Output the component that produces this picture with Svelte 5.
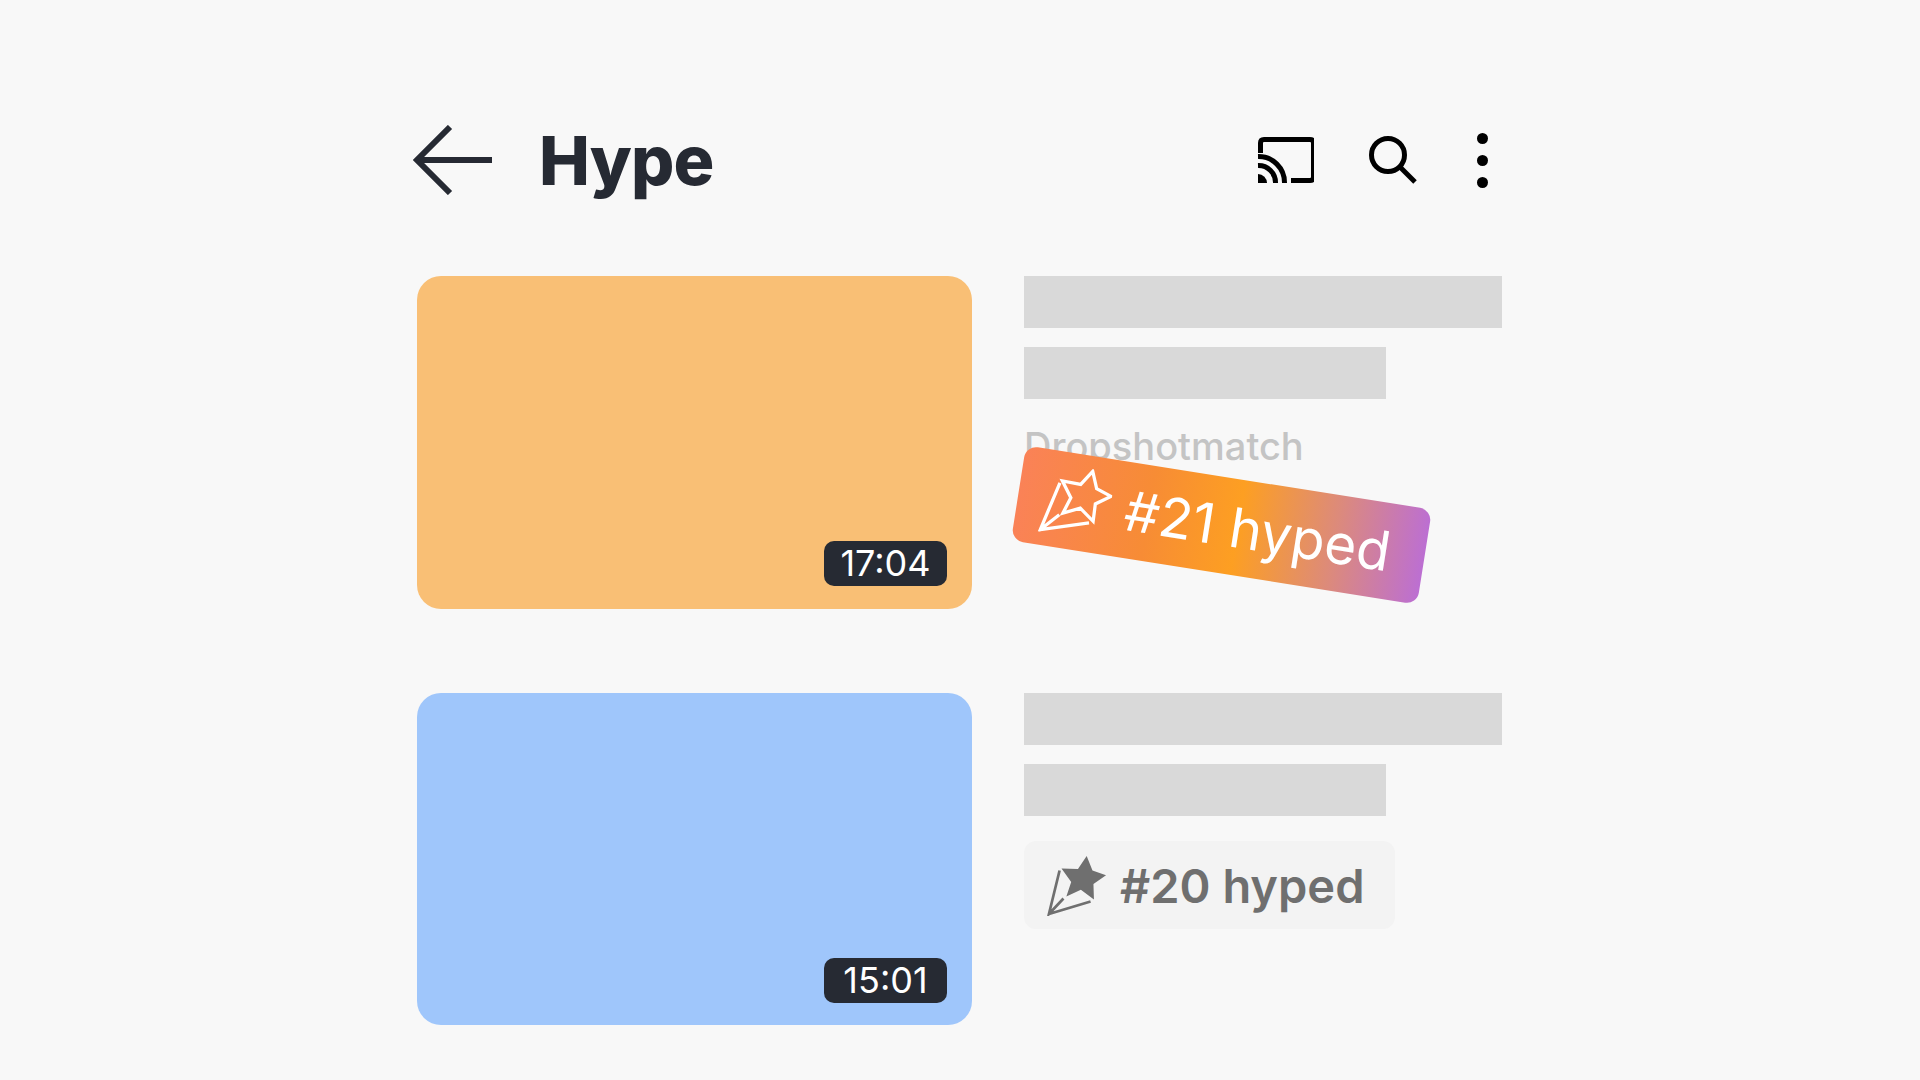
<script>
  const videos = [
    { color: '#f9bf75', time: '17:04', rank: 21, channel: 'Dropshotmatch' },
    { color: '#9fc6fb', time: '15:01', rank: 20 }
  ];
  const star = 'M52 10l6 15 14 5-13 9 .5 16-13.500-10L31 52l5-15-10-14 17 .5z';
</script>

<div class="page">
  <header>
    <svg class="back" width="80" height="70" viewBox="0 0 80 70" fill="none" stroke="#262a33" stroke-width="6">
      <path d="M80 35H5M38 2L5 35l33 33" />
    </svg>
    <h1>Hype</h1>
    <div class="actions">
      <svg width="57" height="46" viewBox="0 0 57 46" fill="none" stroke="#000" stroke-width="5">
        <path d="M3.500 16V6q0-3.500 3.500-3.500h46q3.500 0 3.500 3.500v34q0 3.500-3.500 3.500H34" />
        <path d="M1 19.500a26 26 0 0 1 26.500 26.500M1 28.500a17 17 0 0 1 17.500 17.500" />
        <path d="M1 37a9 9 0 0 1 9 9H1z" fill="#000" stroke="none" />
      </svg>
      <svg class="search" width="48" height="48" viewBox="0 0 48 48" fill="none" stroke="#000" stroke-width="5">
        <circle cx="19" cy="19" r="16.500" />
        <path d="M31 31l15 15" />
      </svg>
      <div class="dots"><span></span><span></span><span></span></div>
    </div>
  </header>

  {#each videos as v}
    <section class="row">
      <div class="thumb" style="background: {v.color}">
        <span class="time">{v.time}</span>
      </div>
      <div class="info">
        <div class="bar"></div>
        <div class="bar short"></div>
        {#if v.channel}
          <div class="channel">{v.channel}</div>
          <div class="chip hot">
            <svg width="68" height="70" viewBox="11 8 62 64" fill="none" stroke="#fff" stroke-width="3">
              <path d={star} />
              <path d="M24 25L13 70l15-16M13 70l43-13" />
            </svg>
            <span>#{v.rank} hyped</span>
          </div>
        {:else}
          <div class="chip">
            <svg width="60" height="62" viewBox="11 8 62 64" fill="#6f6f6f" stroke="#6f6f6f" stroke-width="2.800">
              <path d={star} stroke="none" />
              <path d="M24 25L13 70l15-16M13 70l43-13" fill="none" />
            </svg>
            <span>#{v.rank} hyped</span>
          </div>
        {/if}
      </div>
    </section>
  {/each}
</div>

<style>
  :global(body) {
    background: #f8f8f8;
    font-family: Inter, "Liberation Sans", sans-serif;
  }
  .page {
    width: 1086px;
    height: 1080px;
    box-sizing: border-box;
    margin-left: 416px;
    padding-top: 125px;
  }
  header {
    display: flex;
    align-items: center;
    height: 70px;
    margin-bottom: 81px;
  }
  .back {
    margin-left: -4px;
  }
  h1 {
    margin: 0 0 0 47px;
    font-size: 68px;
    font-weight: 800;
    letter-spacing: -0.900px;
    color: #262a33;
    line-height: 70px;
  }
  .actions {
    margin-left: auto;
    display: flex;
    align-items: center;
  }
  .search {
    margin-left: 55px;
  }
  .dots {
    display: flex;
    flex-direction: column;
    gap: 11px;
    margin: 0 14px 0 60px;
  }
  .dots span {
    width: 11px;
    height: 11px;
    border-radius: 50%;
    background: #000;
  }
  .row {
    display: flex;
    gap: 52px;
    height: 332.500px;
    margin-bottom: 84.500px;
  }
  .thumb {
    position: relative;
    flex: none;
    width: 555.500px;
    margin-left: 0.500px;
    height: 332.500px;
    border-radius: 24px;
  }
  .row + .row .thumb {
    height: 332px;
  }
  .time {
    position: absolute;
    right: 25px;
    bottom: 22px;
    width: 123px;
    height: 45px;
    margin-bottom: 0.500px;
    border-radius: 10px;
    background: #262a33;
    color: #fff;
    font-size: 36px;
    line-height: 45px;
    text-align: center;
  }
  .info {
    position: relative;
    flex: 1;
  }
  .bar {
    height: 52px;
    background: #d9d9d9;
    margin-bottom: 19px;
  }
  .bar.short {
    width: 362px;
  }
  .channel {
    font-size: 38px;
    font-weight: 500;
    line-height: 44px;
    margin-top: 25px;
    color: #c4c4c4;
  }
  .chip {
    display: inline-flex;
    align-items: center;
    gap: 13px;
    box-sizing: border-box;
    width: 371px;
    height: 88px;
    margin-top: 6px;
    padding-left: 23px;
    border-radius: 12px;
    background: #f3f3f3;
    color: #6f6f6f;
    font-size: 47px;
    font-weight: 600;
  }
  .chip.hot {
    position: absolute;
    left: -8px;
    top: 201px;
    width: 411px;
    height: 96px;
    margin: 0;
    padding-left: 25px;
    gap: 15px;
    transform: rotate(9deg);
    background: linear-gradient(90deg, #fa8257 0%, #f78c35 32%, #fd9f22 54%, #dc8a7c 78%, #bc6fd2 100%);
    color: #fff;
    font-size: 55px;
    font-weight: 400;
  }
</style>
